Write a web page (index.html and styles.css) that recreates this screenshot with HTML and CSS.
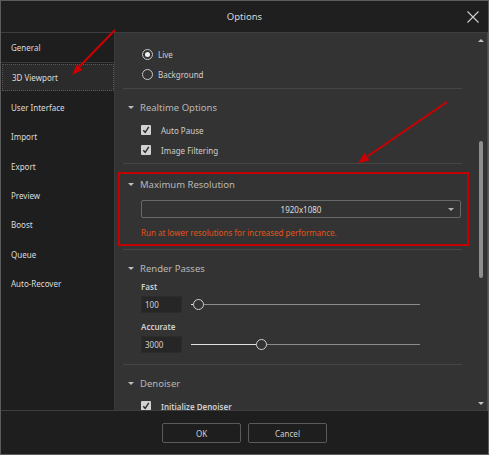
FILE: index.html
```html
<!DOCTYPE html>
<html lang="en">
<head>
  <meta charset="UTF-8" />
  <title>Options</title>
  <link rel="stylesheet" href="styles.css">
</head>
<body>
  <div class="window">
    <div class="titlebar">
      <span class="title">Options</span>
      <svg class="close" width="12" height="12" viewBox="0 0 12 12"><path d="M0.5 0.5L11.5 11.5M11.5 0.5L0.5 11.5" stroke="#cfcfcf" stroke-width="1.1" fill="none"/></svg>
    </div>

    <div class="main">
      <!-- Left navigation -->
      <div class="sidebar">
        <div class="nav-item first">General</div>
        <div class="nav-item selected">3D Viewport</div>
        <div class="nav-item">User Interface</div>
        <div class="nav-item">Import</div>
        <div class="nav-item">Export</div>
        <div class="nav-item">Preview</div>
        <div class="nav-item">Boost</div>
        <div class="nav-item">Queue</div>
        <div class="nav-item">Auto-Recover</div>
      </div>

      <!-- Settings pane -->
      <div class="content">
        <div class="scroll-area">
          <div class="option radio-row">
            <span class="radio checked"></span>Live
          </div>
          <div class="option radio-row">
            <span class="radio"></span>Background
          </div>
          <div class="separator"></div>

          <div class="section-head"><span class="caret"></span>Realtime Options</div>
          <div class="option check-row">
            <svg class="check" width="10" height="10" viewBox="0 0 10 10"><rect width="10" height="10" rx="1" fill="#d2d2d2"/><path d="M2.3 5.2L4.2 7.4L7.8 1.9" stroke="#2a2a2a" stroke-width="1.4" fill="none"/></svg>Auto Pause
          </div>
          <div class="option check-row">
            <svg class="check" width="10" height="10" viewBox="0 0 10 10"><rect width="10" height="10" rx="1" fill="#d2d2d2"/><path d="M2.3 5.2L4.2 7.4L7.8 1.9" stroke="#2a2a2a" stroke-width="1.4" fill="none"/></svg>Image Filtering
          </div>
          <div class="separator"></div>

          <div class="section resolution">
            <div class="section-head"><span class="caret"></span>Maximum Resolution</div>
            <div class="dropdown">
              <span>1920x1080</span>
              <span class="dd-arrow"></span>
            </div>
            <div class="hint">Run at lower resolutions for increased performance.</div>
          </div>
          <div class="separator"></div>

          <div class="section-head"><span class="caret"></span>Render Passes</div>
          <div class="field-label">Fast</div>
          <div class="slider-row">
            <div class="num-input">100</div>
            <div class="slider">
              <div class="track-fill" style="width: 7px"></div>
              <div class="thumb" style="left: 7px"></div>
            </div>
          </div>
          <div class="field-label">Accurate</div>
          <div class="slider-row">
            <div class="num-input">3000</div>
            <div class="slider">
              <div class="track-fill" style="width: 70px"></div>
              <div class="thumb" style="left: 70px"></div>
            </div>
          </div>
          <div class="separator"></div>

          <div class="section-head"><span class="caret"></span>Denoiser</div>
          <div class="option check-row strong">
            <svg class="check" width="10" height="10" viewBox="0 0 10 10"><rect width="10" height="10" rx="1" fill="#d2d2d2"/><path d="M2.3 5.2L4.2 7.4L7.8 1.9" stroke="#2a2a2a" stroke-width="1.4" fill="none"/></svg>Initialize Denoiser
          </div>
        </div>

        <div class="scrollbar">
          <span class="sb-up"></span>
          <span class="sb-thumb"></span>
          <span class="sb-down"></span>
        </div>
      </div>
    </div>

    <div class="footer">
      <button>OK</button>
      <button>Cancel</button>
    </div>

    <!-- red annotations drawn on top of the screenshot -->
    <svg class="annotations" width="489" height="455" viewBox="0 0 489 455">
      <rect x="119" y="173" width="349" height="72" fill="none" stroke="#c40000" stroke-width="2"/>
      <line x1="115" y1="30" x2="79" y2="67" stroke="#cc0000" stroke-width="2"/>
      <polygon points="72,75 82.5,69.9 76.7,64.3" fill="#cc0000"/>
      <line x1="447" y1="102" x2="368" y2="156" stroke="#cc0000" stroke-width="2"/>
      <polygon points="358,163 369.6,160.5 364.6,153.1" fill="#cc0000"/>
    </svg>
  </div>
</body>
</html>
```

FILE: styles.css
```css
body {
  margin: 0;
  background: #1e1e1e;
  font-family: "Noto Sans", "Open Sans", sans-serif;
}
.window {
  position: relative;
  width: 489px;
  height: 455px;
  box-sizing: border-box;
  border: 1px solid #5c5c5c;
  background: #1e1e1e;
  display: flex;
  flex-direction: column;
}
.titlebar {
  height: 31px;
  flex: none;
  display: flex;
  align-items: center;
  justify-content: center;
  position: relative;
  background: #1f1f1f;
  border-bottom: 1px solid #3e3e3e;
}
.title {
  color: #d6d6d6;
  font-size: 9.5px;
}
.close {
  position: absolute;
  right: 9px;
  top: 10px;
}
.main {
  flex: 1;
  display: flex;
  min-height: 0;
}
.sidebar {
  width: 113px;
  flex: none;
  border-right: 1px solid #3a3a3a;
  background: #1e1e1e;
}
.nav-item {
  height: 29.33px;
  display: flex;
  align-items: center;
  padding-left: 10px;
  box-sizing: border-box;
  color: #dcdcdc;
  font-size: 8px;
}
.nav-item.first {
  height: 30px;
  border-bottom: 1px solid #3a3a3a;
}
.nav-item.selected {
  height: 27px;
  margin: 1px 0 2px 1px;
  background: #2b2b2b;
  border: 1px dotted #555;
  padding-left: 9px;
}
.content {
  flex: 1;
  display: flex;
  background: #333333;
  border-right: 1px solid #4a4a4a;
  min-width: 0;
}
.scroll-area {
  flex: 1;
  padding: 11px 10px 0 8px;
  overflow: hidden;
  color: #cfcfcf;
  font-size: 8px;
}
.option {
  display: flex;
  align-items: center;
  height: 20px;
  padding-left: 19px;
}
.radio {
  width: 9px;
  height: 9px;
  border: 1px solid #c8c8c8;
  border-radius: 50%;
  margin-right: 5px;
  box-sizing: content-box;
  position: relative;
}
.radio.checked::after {
  content: "";
  position: absolute;
  left: 2px;
  top: 2px;
  width: 5px;
  height: 5px;
  border-radius: 50%;
  background: #f2f2f2;
}
.check-row {
  padding-left: 18px;
}
.section-head + .check-row {
  margin-top: 3px;
}
.check {
  margin-right: 10px;
  flex: none;
}
.strong {
  font-weight: 600;
}
.separator {
  height: 1px;
  background: #454545;
  margin: 4px 0 8px;
}
.section-head {
  display: flex;
  align-items: center;
  height: 20px;
  padding-left: 5px;
  color: #b8b8b8;
  font-size: 9.5px;
}
.caret {
  width: 0;
  height: 0;
  border-left: 3px solid transparent;
  border-right: 3px solid transparent;
  border-top: 3px solid #bdbdbd;
  margin-right: 6px;
}
.check-row + .separator {
  margin-top: 3px;
}
.resolution {
  padding: 2px 0 7px;
}
.dropdown {
  margin: 6px 1px 0 18px;
  height: 18px;
  box-sizing: border-box;
  border: 1px solid #686868;
  border-radius: 2px;
  display: flex;
  align-items: center;
  justify-content: center;
  position: relative;
  color: #dedede;
}
.dd-arrow {
  position: absolute;
  right: 6px;
  top: 7px;
  border-left: 3px solid transparent;
  border-right: 3px solid transparent;
  border-top: 3px solid #b0b0b0;
}
.hint {
  margin: 9px 0 0 18px;
  color: #e2531a;
}
.field-label {
  padding-left: 18px;
  height: 16px;
  display: flex;
  align-items: center;
  color: #d0d0d0;
  font-weight: 600;
}
.slider-row {
  display: flex;
  align-items: center;
  gap: 9px;
  padding-left: 18px;
  margin: 2px 0 5px;
}
.num-input {
  width: 41px;
  height: 17px;
  box-sizing: border-box;
  padding-left: 3px;
  display: flex;
  align-items: center;
  background: #262626;
  border: 1px solid #2c2c2c;
  color: #d4d4d4;
}
.slider {
  position: relative;
  width: 229px;
  height: 1px;
  background: #8c8c8c;
}
.track-fill {
  position: absolute;
  left: 0;
  top: 0;
  height: 1px;
  background: #e0e0e0;
}
.thumb {
  position: absolute;
  top: -5px;
  width: 9px;
  height: 9px;
  margin-left: -5px;
  border-radius: 50%;
  border: 1px solid #d0d0d0;
  background: #333;
}
.slider-row + .separator {
  margin-top: 11px;
}
.scrollbar {
  width: 15px;
  flex: none;
  position: relative;
}
.sb-up,
.sb-down {
  position: absolute;
  left: 6px;
  border-left: 3px solid transparent;
  border-right: 3px solid transparent;
}
.sb-up {
  top: 6px;
  border-bottom: 3px solid #c0c0c0;
}
.sb-down {
  bottom: 5px;
  border-top: 3px solid #c0c0c0;
}
.sb-thumb {
  position: absolute;
  left: 7px;
  top: 108px;
  width: 4px;
  height: 137px;
  border-radius: 2px;
  background: #8e8e8e;
}
.footer {
  height: 43px;
  flex: none;
  border-top: 1px solid #3e3e3e;
  background: #1e1e1e;
  display: flex;
  justify-content: center;
  align-items: center;
  gap: 7px;
}
.footer button {
  width: 79px;
  height: 20px;
  background: #1e1e1e;
  border: 1px solid #5a5a5a;
  border-radius: 2px;
  color: #cfcfcf;
  font-family: inherit;
  font-size: 8px;
  margin-top: 1px;
}
.annotations {
  position: absolute;
  left: -1px;
  top: -1px;
  pointer-events: none;
}
```
